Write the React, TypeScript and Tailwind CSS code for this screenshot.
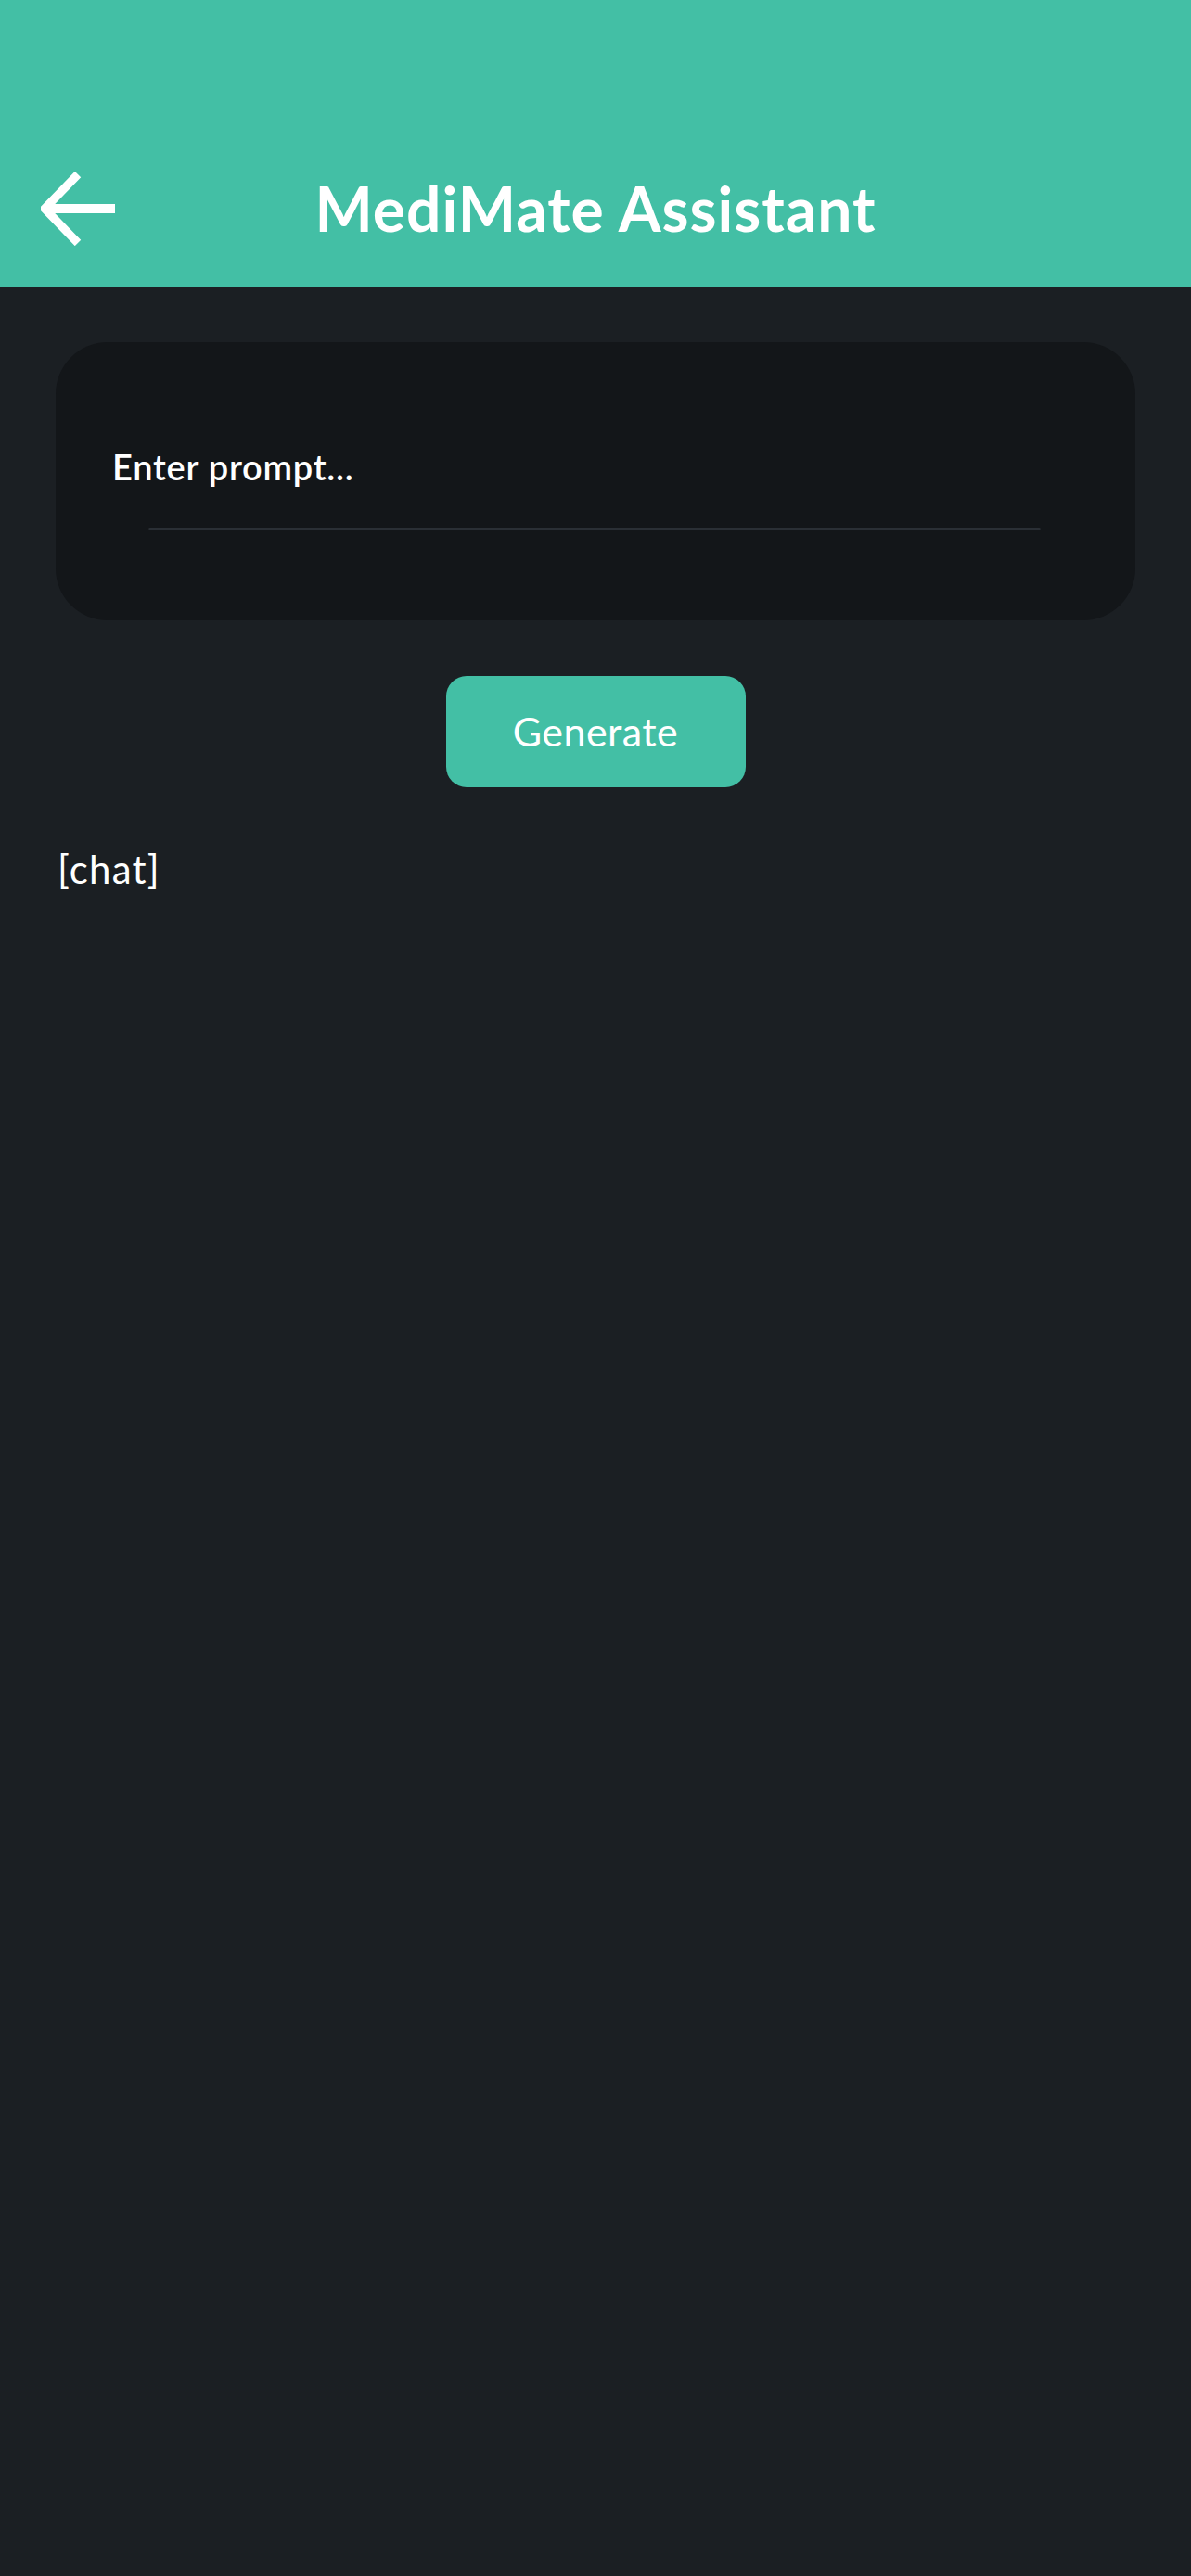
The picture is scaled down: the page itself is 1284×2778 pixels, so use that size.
export default function App() {
  return (
    <div className="min-h-[2778px] w-full bg-[#1b1f23]">
      {/* Header */}
      <header className="bg-[#43bfa5] pt-[185px] pb-[44px]">
        <div className="grid h-[80px] grid-cols-[1fr_auto_1fr] items-center">
          <button className="ml-[44px] flex h-[80px] w-[80px] items-center justify-start">
            <svg width="80" height="80" viewBox="0 0 80 80" fill="none">
              <path d="M40 3L4 40L40 77" stroke="white" strokeWidth="9" strokeLinejoin="miter" />
              <path d="M6 40H80" stroke="white" strokeWidth="10" />
            </svg>
          </button>
          <h1 className="font-['Lato',sans-serif] text-[66px] font-bold leading-none tracking-[0.015em] text-white">
            MediMate Assistant
          </h1>
          <div />
        </div>
      </header>

      {/* Body */}
      <main className="px-[60px] pt-[60px]">
        {/* Prompt card */}
        <div className="flex h-[300px] flex-col rounded-[56px] bg-[#131619] pt-[110px]">
          <div className="pl-[61px] font-['Lato',sans-serif] text-[38px] font-semibold leading-[48px] tracking-[0.02em] text-white">
            Enter prompt...
          </div>
          <div className="mt-[42px] ml-[100px] mr-[102px] h-[3px] rounded-full bg-[#2a2f35]" />
        </div>

        {/* Generate */}
        <div className="mt-[60px] flex justify-center">
          <button className="h-[120px] w-[323px] rounded-[22px] bg-[#43bfa5] font-['Lato',sans-serif] text-[43px] font-normal tracking-[0.01em] text-white">
            Generate
          </button>
        </div>

        {/* Chat */}
        <div className="mt-[62px] pl-[2px] font-['Lato',sans-serif] text-[42px] leading-[52px] tracking-[0.03em] text-white">
          [chat]
        </div>
      </main>
    </div>
  )
}
